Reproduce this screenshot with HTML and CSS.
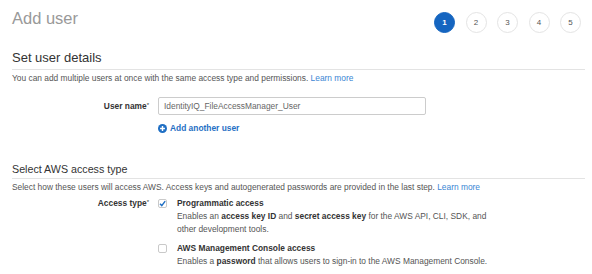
FILE: index.html
```html
<!DOCTYPE html>
<html lang="en">
<head>
  <meta charset="UTF-8">
  <meta name="viewport" content="width=device-width, initial-scale=1.0">
  <title>Add user</title>
  <link rel="stylesheet" href="styles.css">
</head>
<body>
<div class="page">
  <header class="wizard-head">
    <h1>Add user</h1>
    <ol class="steps">
      <li class="active">1</li>
      <li>2</li>
      <li>3</li>
      <li>4</li>
      <li>5</li>
    </ol>
  </header>

  <section class="panel">
    <h2 class="panel-title">Set user details</h2>
    <p class="panel-desc">You can add multiple users at once with the same access type and permissions. <a href="#">Learn more</a></p>
    <div class="field-row">
      <label class="field-label" for="userName">User name<sup>*</sup></label>
      <div class="field-control">
        <input type="text" id="userName" value="IdentityIQ_FileAccessManager_User">
        <a href="#" class="add-link">
          <svg width="9" height="9" viewBox="0 0 10 10"><circle cx="5" cy="5" r="5" fill="#1f6fc4"/><path d="M5 2.3v5.4M2.3 5h5.4" stroke="#fff" stroke-width="1.6"/></svg>
          Add another user
        </a>
      </div>
    </div>
  </section>

  <section class="panel panel-access">
    <h3 class="panel-subtitle">Select AWS access type</h3>
    <p class="panel-desc">Select how these users will access AWS. Access keys and autogenerated passwords are provided in the last step. <a href="#">Learn more</a></p>
    <div class="field-row options-row">
      <span class="field-label">Access type<sup>*</sup></span>
      <div class="field-control">
        <label class="option">
          <span class="check checked">
            <svg width="9" height="9" viewBox="0 0 10 10"><path d="M2.2 5.3l2 2 3.8-5" fill="none" stroke="#1f6fc4" stroke-width="1.6"/></svg>
          </span>
          <span class="option-text">
            <strong>Programmatic access</strong>
            <span class="hint">Enables an <b>access key ID</b> and <b>secret access key</b> for the AWS API, CLI, SDK, and other development tools.</span>
          </span>
        </label>
        <label class="option">
          <span class="check"></span>
          <span class="option-text">
            <strong>AWS Management Console access</strong>
            <span class="hint">Enables a <b>password</b> that allows users to sign-in to the AWS Management Console.</span>
          </span>
        </label>
      </div>
    </div>
  </section>
</div>
</body>
</html>
```

FILE: styles.css
```css
body {
  margin: 0;
  background: #fff;
  font-family: "Liberation Sans", Arial, sans-serif;
  font-size: 8.4px;
  color: #555;
}
.page {
  padding: 0 7px 0 12px;
}
a {
  color: #3a86d4;
  text-decoration: none;
}
.wizard-head {
  display: flex;
  justify-content: space-between;
  align-items: flex-start;
  padding-top: 8px;
}
.wizard-head h1 {
  margin: 0;
  font-size: 16.5px;
  line-height: 20px;
  font-weight: normal;
  color: #999;
}
.steps {
  display: flex;
  gap: 10.5px;
  margin: 4px 4px 0 0;
  padding: 0;
  list-style: none;
}
.steps li {
  width: 19px;
  height: 19px;
  border: 1px solid #e4e4e4;
  border-radius: 50%;
  display: flex;
  align-items: center;
  justify-content: center;
  font-size: 8px;
  color: #555;
}
.steps li.active {
  background: #1565c0;
  border-color: #1565c0;
  color: #fff;
  font-weight: bold;
}
.panel-title {
  margin: 17px 0 0;
  padding-bottom: 3px;
  border-bottom: 1px solid #e3e3e3;
  font-size: 13px;
  line-height: 16px;
  font-weight: normal;
  color: #333;
}
.panel-subtitle {
  margin: 28px 0 0;
  padding-bottom: 2px;
  border-bottom: 1px solid #e3e3e3;
  font-size: 10.7px;
  line-height: 14px;
  font-weight: normal;
  color: #333;
}
.panel-desc {
  margin: 2px 0 0;
  line-height: 12px;
}
.field-row {
  display: flex;
  gap: 9px;
  margin-top: 13px;
}
.field-label {
  width: 137px;
  text-align: right;
  font-weight: bold;
  color: #333;
  line-height: 18px;
}
.field-label sup {
  font-size: 6px;
  font-weight: normal;
  vertical-align: 2px;
  line-height: 0;
}
.field-control input {
  box-sizing: border-box;
  width: 268px;
  height: 18px;
  margin: 0;
  padding: 0 5px;
  border: 1px solid #ccc;
  border-radius: 2px;
  font-family: inherit;
  font-size: 8.4px;
  color: #666;
}
.add-link {
  display: flex;
  align-items: center;
  gap: 3px;
  margin-top: 7px;
  line-height: 12px;
  font-weight: bold;
  color: #1f6fc4;
}
.options-row {
  margin-top: 4px;
}
.options-row .field-label {
  line-height: 13px;
}
.option {
  display: flex;
  gap: 10px;
  line-height: 13px;
}
.option + .option {
  margin-top: 6px;
}
.check {
  box-sizing: border-box;
  flex: none;
  width: 9px;
  height: 9px;
  margin-top: 2px;
  border: 1px solid #c9c9c9;
  border-radius: 2px;
  display: flex;
  align-items: center;
  justify-content: center;
}
.check svg {
  flex: none;
}
.option-text strong {
  display: block;
  color: #333;
}
.hint {
  display: block;
  max-width: 318px;
}
.hint b {
  color: #333;
}
```
